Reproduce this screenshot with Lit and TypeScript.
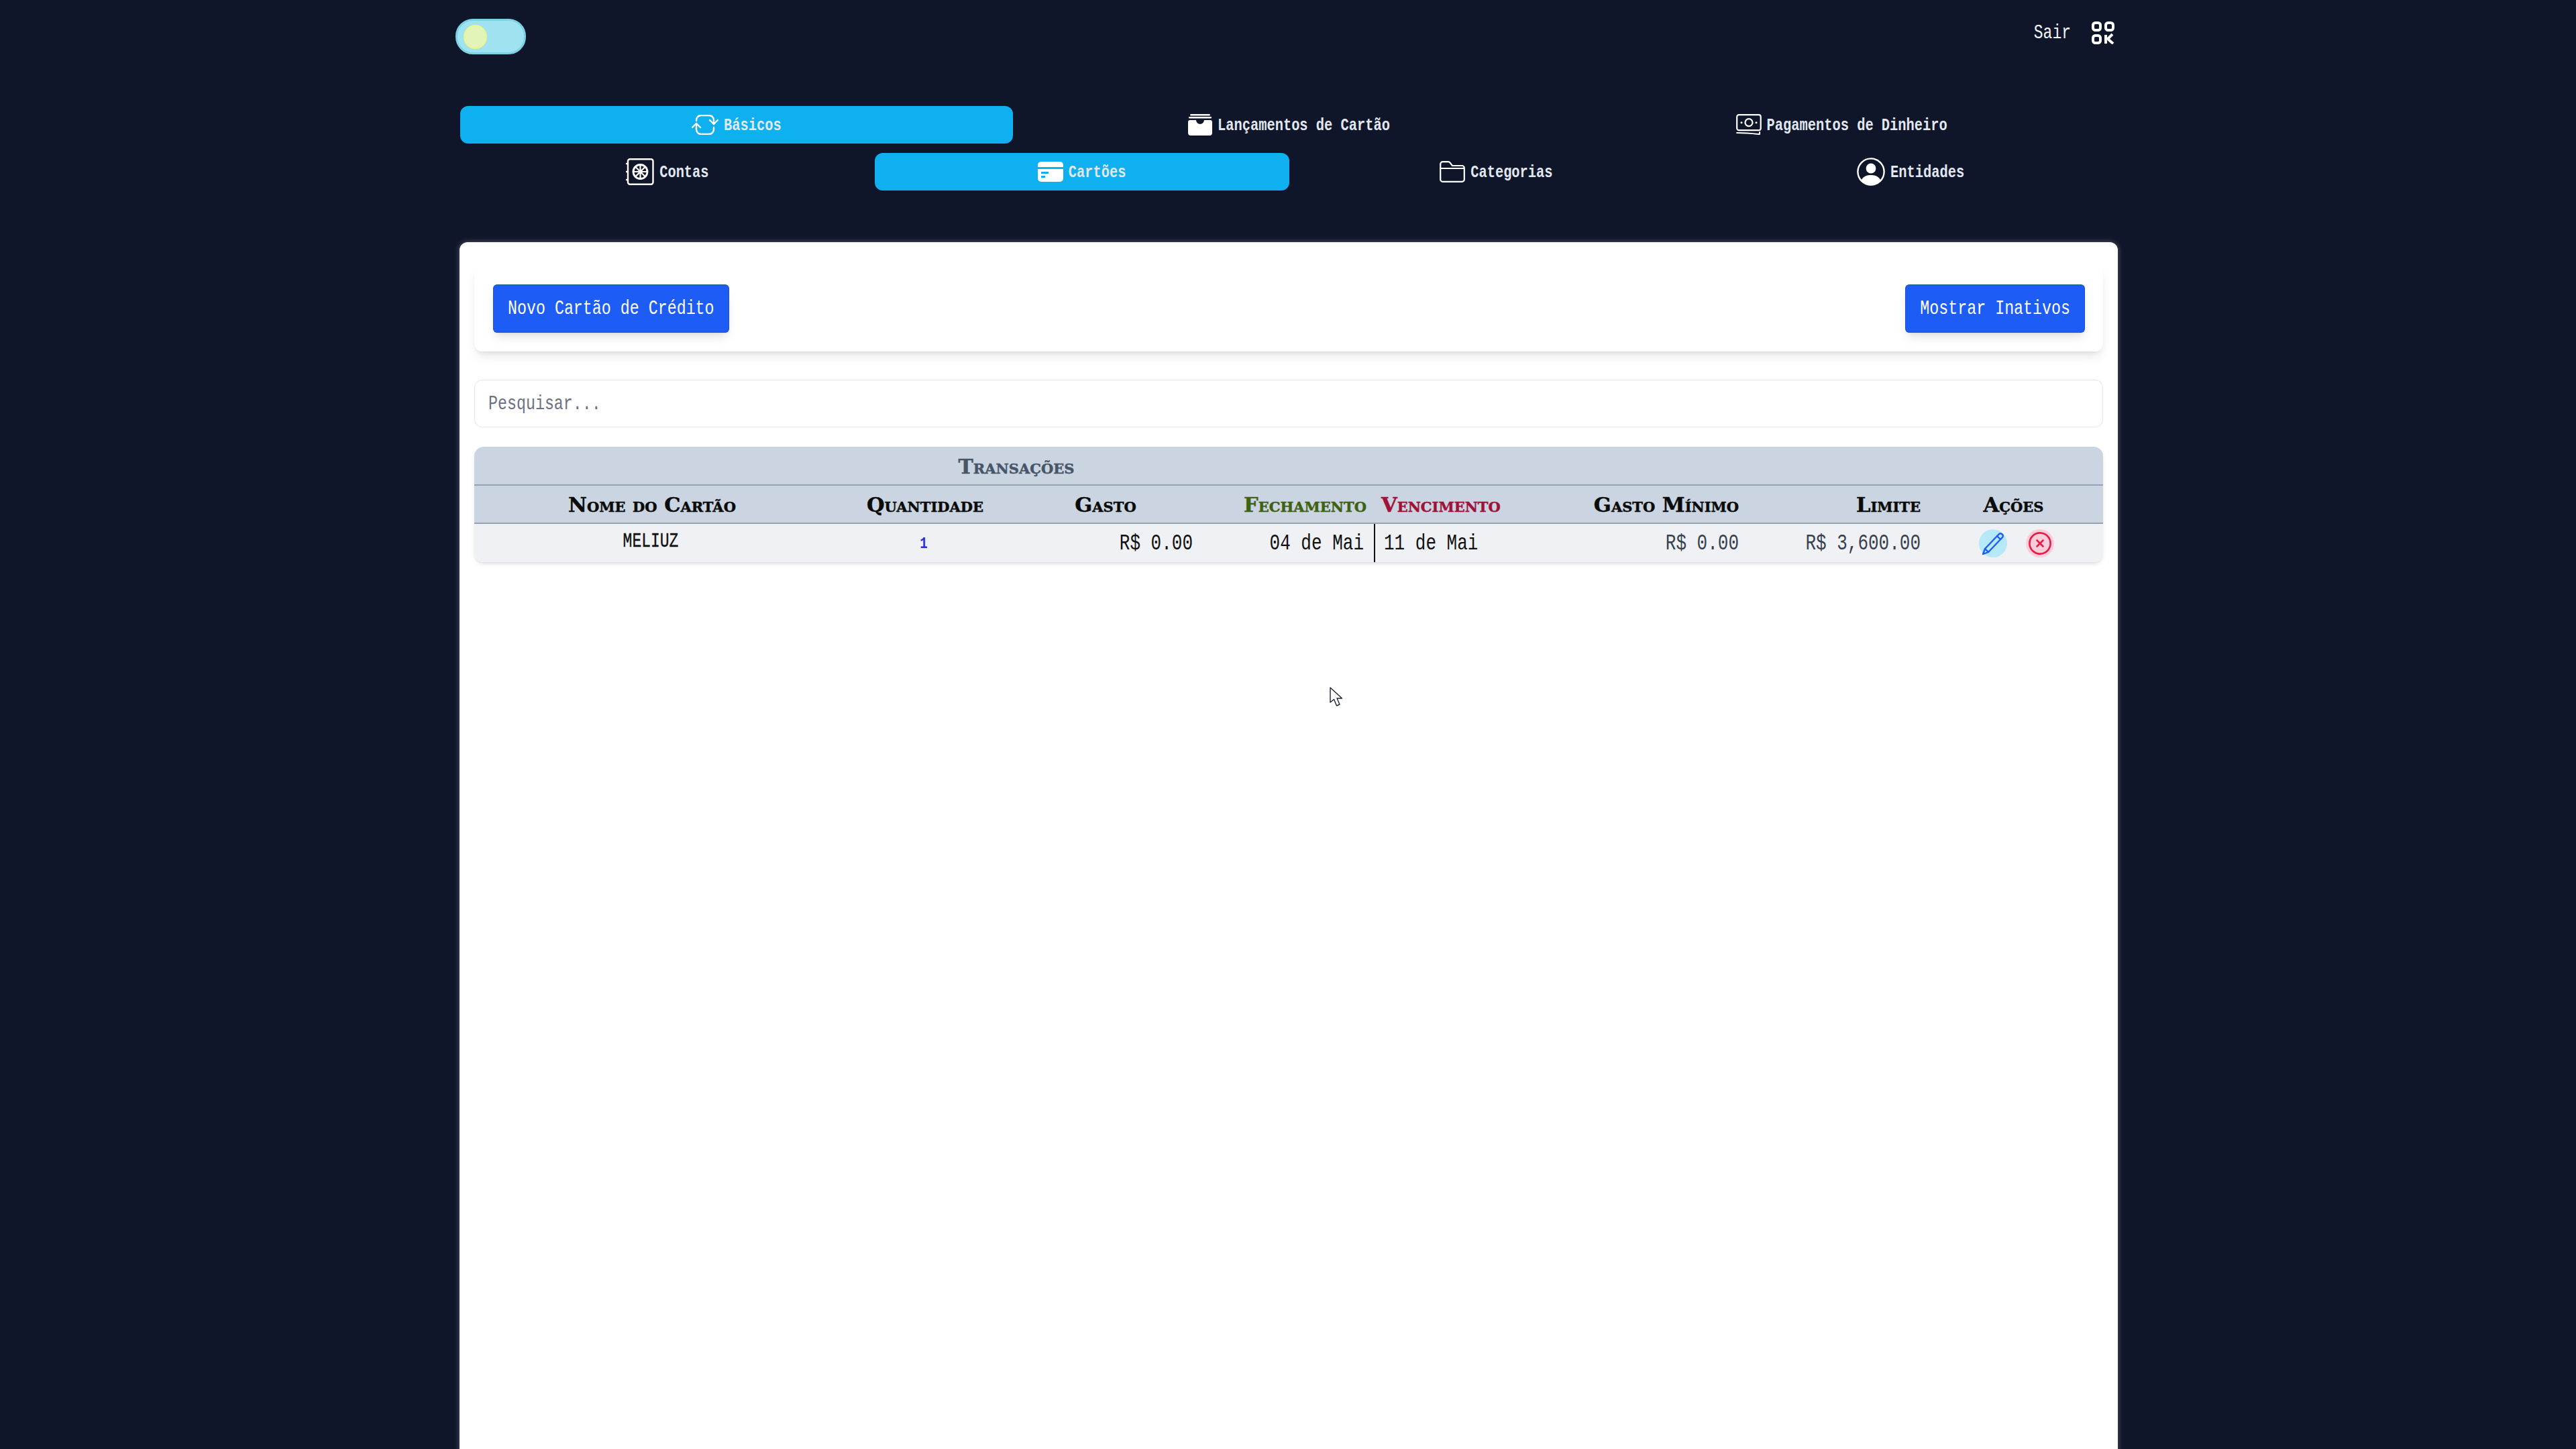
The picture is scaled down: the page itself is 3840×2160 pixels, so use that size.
import { LitElement, html, css, svg } from "lit";
import { customElement } from "lit/decorators.js";

// Icons are drawn on the pixel grid they occupy in the nav bar
const ICONS: Record<string, { w: number; h: number; vb: string; body: unknown }> = {
  cycle: {
    w: 40,
    h: 30,
    vb: "0 0 40 30",
    body: svg`<g fill="none" stroke="currentColor" stroke-width="2.4" stroke-linecap="round" stroke-linejoin="round">
      <path d="M7 9 V8 a7 7 0 0 1 7 -7 H26 a7 7 0 0 1 7 7 V14" />
      <path d="M7 13 V22 a7 7 0 0 0 7 7 H26 a7 7 0 0 0 7 -7 V19" />
      <path d="M1 19 L7 13 L13 19" />
      <path d="M27 8 L33 14 L39 8" />
    </g>`,
  },
  safe: {
    w: 42,
    h: 40,
    vb: "0 0 42 40",
    body: svg`<g fill="none" stroke="currentColor" stroke-linecap="round">
      <rect x="3" y="1.2" width="37.5" height="37.5" rx="3" stroke-width="2.4" />
      <path d="M1 8 h2 M1 20 h2 M1 32 h2" stroke-width="2.4" />
      <circle cx="21.5" cy="20" r="10.5" stroke-width="2.8" />
      <circle cx="21.5" cy="20" r="2.6" fill="currentColor" stroke="none" />
      <path d="M21.5 10 V30 M12 20 H31 M14.5 13 L28.5 27 M28.5 13 L14.5 27" stroke-width="2.2" />
    </g>`,
  },
  card: {
    w: 38,
    h: 30,
    vb: "0 0 38 30",
    body: svg`<path fill="currentColor" fill-rule="evenodd" d="M5 0 H33 a5 5 0 0 1 5 5 V8 H0 V5 a5 5 0 0 1 5 -5 Z M0 11 H38 V25 a5 5 0 0 1 -5 5 H5 a5 5 0 0 1 -5 -5 Z M5 15 h11 v3 h-11 Z M5 21 h6 v3 h-6 Z" />`,
  },
  wallet: {
    w: 36,
    h: 32,
    vb: "0 0 36 32",
    body: svg`<g fill="currentColor">
      <rect x="3" y="0" width="30" height="2.4" rx="1.2" />
      <rect x="1" y="4" width="34" height="2.4" rx="1.2" />
      <path d="M3 9 H12 a6 6 0 0 0 12 0 H33 a3 3 0 0 1 3 3 V28 a4 4 0 0 1 -4 4 H4 a4 4 0 0 1 -4 -4 V12 a3 3 0 0 1 3 -3 Z" />
    </g>`,
  },
  money: {
    w: 38,
    h: 32,
    vb: "0 0 38 32",
    body: svg`<g fill="none" stroke="currentColor" stroke-width="2.2" stroke-linecap="round" stroke-linejoin="round">
      <rect x="1.2" y="1.2" width="35.5" height="23" rx="3" />
      <circle cx="19" cy="12.7" r="5.5" />
      <path d="M8 12.7 h.01 M30 12.7 h.01" stroke-width="3" />
      <path d="M1.2 28 C 12 28 24 29 33 30 H35 V27" />
    </g>`,
  },
  folder: {
    w: 38,
    h: 32,
    vb: "0 0 38 32",
    body: svg`<path fill="none" stroke="currentColor" stroke-width="2.2" stroke-linejoin="round" d="M1.2 11 V4.5 a3.3 3.3 0 0 1 3.3 -3.3 H13 a3 3 0 0 1 2.4 1.2 L19 7 H33.5 a3.3 3.3 0 0 1 3.3 3.3 V27.5 a3.3 3.3 0 0 1 -3.3 3.3 H4.5 a3.3 3.3 0 0 1 -3.3 -3.3 V11 H36.8" />`,
  },
  user: {
    w: 42,
    h: 42,
    vb: "0 0 42 42",
    body: svg`<g>
      <circle cx="21" cy="21" r="19.6" fill="none" stroke="currentColor" stroke-width="2.4" />
      <circle cx="21" cy="16" r="7.4" fill="currentColor" />
      <path fill="currentColor" d="M6.5 33.5 C 10 27.5 15 26 21 26 C 27 26 32 27.5 35.5 33.5 C 32 37.5 27 40 21 40 C 15 40 10 37.5 6.5 33.5 Z" />
    </g>`,
  },
};

const TOP_TABS = [
  { label: "Básicos", icon: "cycle", active: true },
  { label: "Lançamentos de Cartão", icon: "wallet" },
  { label: "Pagamentos de Dinheiro", icon: "money" },
];

const SUB_TABS = [
  { label: "Contas", icon: "safe" },
  { label: "Cartões", icon: "card", active: true },
  { label: "Categorias", icon: "folder" },
  { label: "Entidades", icon: "user" },
];

@customElement("app-root")
export class AppRoot extends LitElement {
  private renderIcon(name: string) {
    const icon = ICONS[name];
    return html`<svg
      class="icon"
      width=${icon.w}
      height=${icon.h}
      viewBox=${icon.vb}
    >
      ${icon.body}
    </svg>`;
  }

  private renderTab(tab: { label: string; icon: string; active?: boolean }) {
    return html`<div class="tab ${tab.active ? "active" : ""}">
      ${this.renderIcon(tab.icon)}<span class="tall">${tab.label}</span>
    </div>`;
  }

  protected render() {
    return html`
      <div class="page">
        <header class="top">
          <div class="toggle"><div class="knob"></div></div>
          <div class="user">
            <span class="sair tall">Sair</span>
            <svg width="34" height="34" viewBox="0 0 34 34" fill="none" stroke="white" stroke-width="4">
              <rect x="2" y="2" width="11" height="11" rx="3.5" />
              <rect x="21" y="2" width="11" height="11" rx="3.5" />
              <rect x="2" y="21" width="11" height="11" rx="3.5" />
              <path d="M21 20 V33 M21 26 H24 L31 19 M24 26 L32 33" stroke-linejoin="round" />
            </svg>
          </div>
        </header>

        <nav class="tabs three">${TOP_TABS.map((t) => this.renderTab(t))}</nav>
        <nav class="tabs four">${SUB_TABS.map((t) => this.renderTab(t))}</nav>

        <main class="panel">
          <div class="toolbar">
            <button class="btn"><span class="tall">Novo Cartão de Crédito</span></button>
            <button class="btn"><span class="tall">Mostrar Inativos</span></button>
          </div>

          <div class="search"><span class="tall">Pesquisar...</span></div>

          <div class="table-wrap">
            <table>
              <colgroup>
                <col style="width:530px" />
                <col style="width:284px" />
                <col style="width:268px" />
                <col style="width:259px" />
                <col style="width:275px" />
                <col style="width:280px" />
                <col style="width:271px" />
                <col style="width:261px" />
              </colgroup>
              <thead>
                <tr class="group">
                  <th colspan="5">Transações</th>
                  <th colspan="3"></th>
                </tr>
                <tr>
                  <th>Nome do Cartão</th>
                  <th>Quantidade</th>
                  <th class="gasto">Gasto</th>
                  <th class="right closing">Fechamento</th>
                  <th class="left due">Vencimento</th>
                  <th class="right">Gasto Mínimo</th>
                  <th class="right">Limite</th>
                  <th class="actions-head">Ações</th>
                </tr>
              </thead>
              <tbody>
                <tr>
                  <td class="name"><span class="tall">MELIUZ</span></td>
                  <td class="count"><span class="tall">1</span></td>
                  <td class="right val"><span class="tall">R$ 0.00</span></td>
                  <td class="right val date-close"><span class="tall">04 de Mai</span></td>
                  <td class="left val date-due"><span class="tall">11 de Mai</span></td>
                  <td class="right val light"><span class="tall">R$ 0.00</span></td>
                  <td class="right val light"><span class="tall">R$ 3,600.00</span></td>
                  <td>
                    <div class="actions">
                      <div class="round edit">
                        <svg width="34" height="36" viewBox="0 0 34 36" fill="none" stroke="#1d5cf5" stroke-width="2.4" stroke-linejoin="round" stroke-linecap="round">
                          <path d="M2 34 L5 26 L26 4 a3.6 3.6 0 0 1 5 5 L10 31 Z" />
                          <path d="M5 26 L10 31 M23 7 L28 12" />
                        </svg>
                      </div>
                      <div class="round del">
                        <svg width="34" height="34" viewBox="0 0 34 34" fill="none" stroke="#e11d48" stroke-linecap="round">
                          <circle cx="17" cy="17" r="15.6" stroke-width="2.6" />
                          <path d="M12.5 12.5 L21.5 21.5 M21.5 12.5 L12.5 21.5" stroke-width="2.6" />
                        </svg>
                      </div>
                    </div>
                  </td>
                </tr>
              </tbody>
            </table>
          </div>
        </main>
      </div>

      <svg class="cursor" width="20" height="30" viewBox="0 0 20 30">
        <path d="M1 1 V23 L6.5 18.5 L10.5 28 L15 26 L11 17 H18.5 Z" fill="white" stroke="#1f2433" stroke-width="1.4" stroke-linejoin="round" />
      </svg>
    `;
  }

  static styles = css`
    :host {
      display: block;
      position: relative;
      height: 100vh;
      box-sizing: border-box;
      padding-left: 2px;
      overflow: hidden;
      background: #10162a;
      font-family: "Liberation Mono", monospace;
      color: #fff;
    }

    .page {
      width: 2472px;
      margin: 0 auto;
    }

    /* the reference's typeface is a tall condensed slab, so stretch the mono */
    .tall {
      display: inline-block;
      transform: scaleY(1.3);
      white-space: pre;
    }

    .top {
      height: 158px;
      display: flex;
      justify-content: space-between;
      align-items: flex-start;
    }

    .toggle {
      width: 105px;
      height: 53px;
      box-sizing: border-box;
      margin: 28px 0 0 -6px;
      padding-left: 9px;
      display: flex;
      align-items: center;
      border: 3px solid #7dd3e6;
      border-radius: 26px;
      background: #9ee3ef;
    }

    .knob {
      width: 35px;
      height: 36px;
      box-sizing: border-box;
      border-radius: 50%;
      background: #e3f4b8;
      border: 2px solid #ecf58c;
    }

    .user {
      display: flex;
      align-items: center;
      gap: 31px;
      margin: 32px 5px 0 0;
    }

    .sair {
      font-size: 23px;
      color: #f1f5f9;
    }

    .tabs {
      display: grid;
      margin-left: 1px;
    }

    .three {
      grid-template-columns: repeat(3, 1fr);
      margin-bottom: 14px;
    }

    .four {
      grid-template-columns: repeat(4, 1fr);
      margin-bottom: 77px;
    }

    .tab {
      height: 56px;
      display: flex;
      align-items: center;
      justify-content: center;
      gap: 8px;
      border-radius: 12px;
      font-size: 20.4px;
      font-weight: 700;
      color: #e2e8f0;
    }

    .tab .icon {
      color: #fff;
      flex: none;
    }

    .tab.active {
      background: #0fb0f0;
    }

    .panel {
      background: #fff;
      border-radius: 12px 12px 0 0;
      min-height: 1900px;
      padding: 34px 22px 0;
      box-shadow: 0 0 8px rgba(255, 255, 255, 0.3);
    }

    .toolbar {
      height: 129px;
      box-sizing: border-box;
      padding: 0 27px 0 28px;
      display: flex;
      align-items: center;
      justify-content: space-between;
      border-radius: 12px;
      background: #fff;
      box-shadow: 0 10px 15px -3px rgba(0, 0, 0, 0.1), 0 4px 6px -4px rgba(0, 0, 0, 0.1);
    }

    .btn {
      height: 72px;
      padding: 0 21px;
      border: 1px solid #1d4ed8;
      border-top-color: #155e75;
      border-radius: 6px;
      background: #1d5cf5;
      color: #fff;
      font-family: inherit;
      font-size: 23.3px;
      box-shadow: 0 10px 15px -3px rgba(0, 0, 0, 0.1), 0 4px 6px -4px rgba(0, 0, 0, 0.1);
    }

    .search {
      height: 71px;
      box-sizing: border-box;
      margin: 42px 0 29px;
      padding: 0 20px;
      display: flex;
      align-items: center;
      border: 1px solid #e5e7eb;
      border-top-color: #dbe4f5;
      border-radius: 12px;
      font-size: 23.3px;
      color: #6b7280;
    }

    .table-wrap {
      border-radius: 14px;
      overflow: hidden;
      box-shadow: 0 4px 6px -1px rgba(0, 0, 0, 0.1), 0 2px 4px -2px rgba(0, 0, 0, 0.1);
    }

    table {
      width: 2428px;
      table-layout: fixed;
      border-collapse: separate;
      border-spacing: 0;
    }

    thead {
      background: #cbd5e1;
    }

    th {
      height: 57px;
      box-sizing: border-box;
      padding: 0;
      font-family: "DejaVu Serif", serif;
      font-variant: small-caps;
      font-weight: 700;
      font-size: 30.5px;
      -webkit-text-stroke: 0.5px currentColor;
      color: #0b0b0b;
      border-bottom: 2px solid #94a3b8;
      white-space: nowrap;
    }

    .group th {
      height: 58px;
      padding-top: 2px;
      font-size: 30px;
      color: #475569;
    }

    .gasto {
      padding-right: 14px;
    }

    .right {
      text-align: right;
      padding-right: 11px;
    }

    .left {
      text-align: left;
      padding-left: 11px;
    }

    .closing {
      color: #3f6212;
    }

    .due {
      color: #9f1239;
    }

    .actions-head {
      padding-right: 6px;
    }

    tbody tr {
      background: #f0f1f5;
    }

    td {
      height: 57px;
      box-sizing: border-box;
      padding: 0;
      text-align: center;
      color: #111;
    }

    .name {
      font-size: 23px;
      -webkit-text-stroke: 0.3px #111;
      padding-right: 4px;
      padding-bottom: 5px;
    }

    .count {
      font-size: 19px;
      font-weight: 700;
      color: #2531e0;
      padding-right: 4px;
    }

    td.val {
      font-size: 26px;
    }

    td.light {
      color: #374151;
    }

    td.date-close {
      padding-right: 15px;
    }

    td.date-due {
      padding-left: 13px;
      border-left: 2px solid #111;
    }

    .actions {
      display: flex;
      gap: 28px;
      padding-left: 76px;
    }

    .round {
      width: 42px;
      height: 42px;
      border-radius: 50%;
      display: flex;
      align-items: center;
      justify-content: center;
    }

    .edit {
      background: #b6e8f8;
    }

    .del {
      background: #fecdd9;
    }

    .cursor {
      position: absolute;
      left: 1982px;
      top: 1024px;
    }
  `;
}
